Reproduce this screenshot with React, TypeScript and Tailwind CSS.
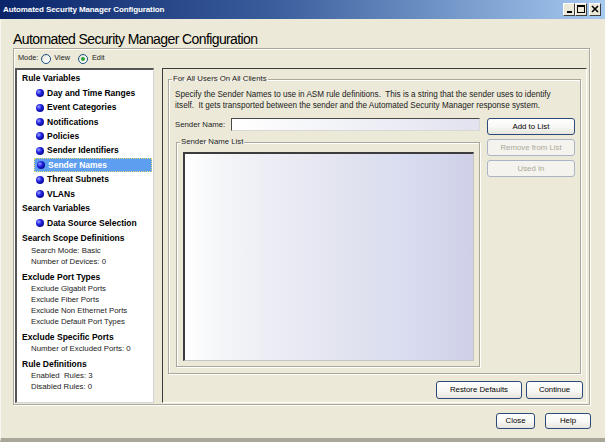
import type { ReactNode } from 'react';

const FONT = "font-['Liberation_Sans',Arial,sans-serif]";

type TreeItem =
  | { kind: 'head'; label: string; after?: boolean }
  | { kind: 'bullet'; label: string; selected?: boolean }
  | { kind: 'plain'; label: string };

const TREE: TreeItem[] = [
  { kind: 'head', label: 'Rule Variables' },
  { kind: 'bullet', label: 'Day and Time Ranges' },
  { kind: 'bullet', label: 'Event Categories' },
  { kind: 'bullet', label: 'Notifications' },
  { kind: 'bullet', label: 'Policies' },
  { kind: 'bullet', label: 'Sender Identifiers' },
  { kind: 'bullet', label: 'Sender Names', selected: true },
  { kind: 'bullet', label: 'Threat Subnets' },
  { kind: 'bullet', label: 'VLANs' },
  { kind: 'head', label: 'Search Variables' },
  { kind: 'bullet', label: 'Data Source Selection' },
  { kind: 'head', label: 'Search Scope Definitions' },
  { kind: 'plain', label: 'Search Mode: Basic' },
  { kind: 'plain', label: 'Number of Devices: 0' },
  { kind: 'head', label: 'Exclude Port Types', after: true },
  { kind: 'plain', label: 'Exclude Gigabit Ports' },
  { kind: 'plain', label: 'Exclude Fiber Ports' },
  { kind: 'plain', label: 'Exclude Non Ethernet Ports' },
  { kind: 'plain', label: 'Exclude Default Port Types' },
  { kind: 'head', label: 'Exclude Specific Ports', after: true },
  { kind: 'plain', label: 'Number of Excluded Ports: 0' },
  { kind: 'head', label: 'Rule Definitions', after: true },
  { kind: 'plain', label: 'Enabled  Rules: 3' },
  { kind: 'plain', label: 'Disabled Rules: 0' },
];

function Bullet() {
  return (
    <span className="h-[8px] w-[8px] shrink-0 rounded-full bg-[radial-gradient(circle_at_35%_35%,#9aa6ff_0%,#2525e6_35%,#00007a_85%)]" />
  );
}

function Radio({ checked }: { checked?: boolean }) {
  return (
    <span className="flex h-[10px] w-[10px] items-center justify-center rounded-full border border-[#1c5180] bg-[linear-gradient(135deg,#dcdad0_0%,#ffffff_70%)]">
      {checked && <span className="h-[4px] w-[4px] rounded-full bg-[#2ea42e]" />}
    </span>
  );
}

function XpButton({
  children,
  disabled,
  className = '',
}: {
  children: ReactNode;
  disabled?: boolean;
  className?: string;
}) {
  return (
    <button
      type="button"
      className={`flex items-center justify-center rounded-[3px] border text-[7.8px] leading-none ${
        disabled
          ? 'border-[#a9b5c7] bg-[#f4f3ee] text-[#aca899]'
          : 'border-[#2c4a78] bg-[linear-gradient(180deg,#ffffff_0%,#f7f7f4_55%,#e6e5de_100%)] text-black'
      } ${className}`}
    >
      {children}
    </button>
  );
}

function TitleButton({ children }: { children: ReactNode }) {
  return (
    <span className="flex h-[13px] w-[12px] items-end justify-center border border-t-white border-l-white border-r-[#404040] border-b-[#404040] bg-[#ece9d8] pb-[2px]">
      {children}
    </span>
  );
}

function TreePanel() {
  return (
    <div className="flex w-[139px] flex-col border-t-2 border-l-2 border-r border-b border-t-[#555] border-l-[#555] border-r-[#d4d4d4] border-b-[#d4d4d4] bg-white pt-[1px] pr-[1px]">
      {TREE.map((item) => {
        if (item.kind === 'head') {
          return (
            <div
              key={item.label}
              className={`flex items-center pl-[5px] text-[8.5px] font-bold text-black ${
                item.after ? 'mt-[3px] h-[13px]' : 'h-[15px]'
              }`}
            >
              {item.label}
            </div>
          );
        }
        if (item.kind === 'plain') {
          return (
            <div
              key={item.label}
              className="flex h-[11px] items-center whitespace-pre pl-[14px] text-[7.8px] text-[#222]"
            >
              {item.label}
            </div>
          );
        }
        return (
          <div key={item.label} className="flex h-[14.4px] items-center pl-[17px]">
            <div
              className={`flex h-full flex-1 items-center gap-[3px] pl-[2px] text-[8.5px] font-bold ${
                item.selected
                  ? 'border border-dotted border-[#e6dc6a] bg-[#5d9ef0] pl-[1px] text-white'
                  : 'text-black'
              }`}
            >
              <Bullet />
              {item.label}
            </div>
          </div>
        );
      })}
    </div>
  );
}

function SenderNamesPanel() {
  return (
    <div className="flex flex-1 flex-col border-t border-l border-r border-b border-t-[#3a3a3a] border-l-[#3a3a3a] border-r-white border-b-white pt-[5px] pr-[5px] pb-[3px] pl-[5px]">
      <fieldset className="flex-1 border border-[#aca899] shadow-[inset_1px_1px_0_#fff,1px_1px_0_#fff]">
        <legend className="ml-[3px] px-[1px] text-[7.8px] leading-[10px] text-[#222]">
          For All Users On All Clients
        </legend>
        <div className="flex h-full flex-col pt-[5px] pr-[5px] pb-[6px] pl-[6px]">
          <p className="text-[8.15px] leading-[11px] text-[#222]">
            Specify the Sender Names to use in ASM rule definitions.&nbsp; This is a string that the sender uses to identify
            <br />
            itself.&nbsp; It gets transported between the sender and the Automated Security Manager response system.
          </p>
          <div className="mt-[7px] flex flex-1 gap-[7px]">
            <div className="flex flex-1 flex-col">
              <div className="flex h-[13px] items-center">
                <span className="w-[56px] text-[7.8px] text-[#222]">Sender Name:</span>
                <div className="h-full flex-1 border-t border-l border-r border-b border-t-[#4a4a4a] border-l-[#4a4a4a] border-r-[#d8d8d8] border-b-[#d8d8d8] bg-[linear-gradient(90deg,#ffffff_0%,#f3f4f8_40%,#e2e2f0_100%)]" />
              </div>
              <fieldset className="mt-[6px] ml-[1px] flex-1 border border-[#aca899] shadow-[inset_1px_1px_0_#fff,1px_1px_0_#fff]">
                <legend className="ml-[3px] px-[1px] text-[7.8px] leading-[10px] text-[#222]">
                  Sender Name List
                </legend>
                <div className="flex h-full flex-col pt-[5px] pr-[5px] pb-[5px] pl-[6px]">
                  <div className="flex-1 border-t-2 border-l-2 border-r border-b border-t-[#3c3c3c] border-l-[#3c3c3c] border-r-[#c4c4c4] border-b-[#c4c4c4] bg-[linear-gradient(90deg,#ffffff_0%,#f5f6f8_12%,#eaebf4_35%,#e0e2ef_60%,#d8dcf0_78%,#cfd0e8_100%)]" />
                </div>
              </fieldset>
            </div>
            <div className="flex w-[88px] flex-col gap-[4px]">
              <XpButton className="h-[17px]">Add to List</XpButton>
              <XpButton disabled className="h-[17px]">
                Remove from List
              </XpButton>
              <XpButton disabled className="h-[17px]">
                Used In
              </XpButton>
            </div>
          </div>
        </div>
      </fieldset>
      <div className="mt-[7px] mr-[-2px] flex justify-end gap-[4px]">
        <XpButton className="h-[18px] w-[86px]">Restore Defaults</XpButton>
        <XpButton className="h-[18px] w-[57px]">Continue</XpButton>
      </div>
    </div>
  );
}

export default function App() {
  return (
    <div className={`${FONT} flex h-[442px] w-[605px] flex-col overflow-hidden bg-[#ece9d8]`}>
      <div className="flex h-[19px] items-center justify-between bg-[linear-gradient(90deg,#0a246a_0%,#3a5d9c_45%,#a6caf0_100%)] pr-[4px] pl-[3px]">
        <span className="text-[8px] font-bold tracking-[-0.1px] text-white">
          Automated Security Manager Configuration
        </span>
        <div className="flex items-center">
          <TitleButton>
            <span className="h-[2px] w-[5px] bg-black" />
          </TitleButton>
          <TitleButton>
            <span className="h-[8px] w-[8px] border border-t-2 border-black" />
          </TitleButton>
          <span className="w-[2px]" />
          <TitleButton>
            <svg width="8" height="8" viewBox="0 0 8 8">
              <path d="M1 1 L7 7 M7 1 L1 7" stroke="#000" strokeWidth="1.6" />
            </svg>
          </TitleButton>
        </div>
      </div>

      <div className="flex flex-1 flex-col border-l border-l-[#f7f6ef] border-b-[4px] border-b-[#a9a79a] pr-[15px] pl-[12px]">
        <h1 className="h-[29px] pt-[12px] text-[14px] leading-[16px] tracking-[-0.6px] text-black">
          Automated Security Manager Configuration
        </h1>
        <div className="flex h-[357px] flex-col border border-[#aca899] pr-[2px] pb-[1px] pl-[1px] shadow-[inset_1px_1px_0_#fff,1px_1px_0_#fff]">
          <div className="flex h-[19px] items-center pl-[3px] text-[7.3px] text-[#222]">
            <span>Mode:</span>
            <span className="ml-[3px]">
              <Radio />
            </span>
            <span className="ml-[3px]">View</span>
            <span className="ml-[8px]">
              <Radio checked />
            </span>
            <span className="ml-[4px]">Edit</span>
          </div>
          <div className="flex flex-1 gap-[8px]">
            <TreePanel />
            <SenderNamesPanel />
          </div>
        </div>
        <div className="flex flex-1 items-center justify-end gap-[10px] pb-[1px]">
          <XpButton className="h-[16px] w-[39px]">Close</XpButton>
          <XpButton className="mr-[-1px] h-[16px] w-[46px]">Help</XpButton>
        </div>
      </div>
    </div>
  );
}
